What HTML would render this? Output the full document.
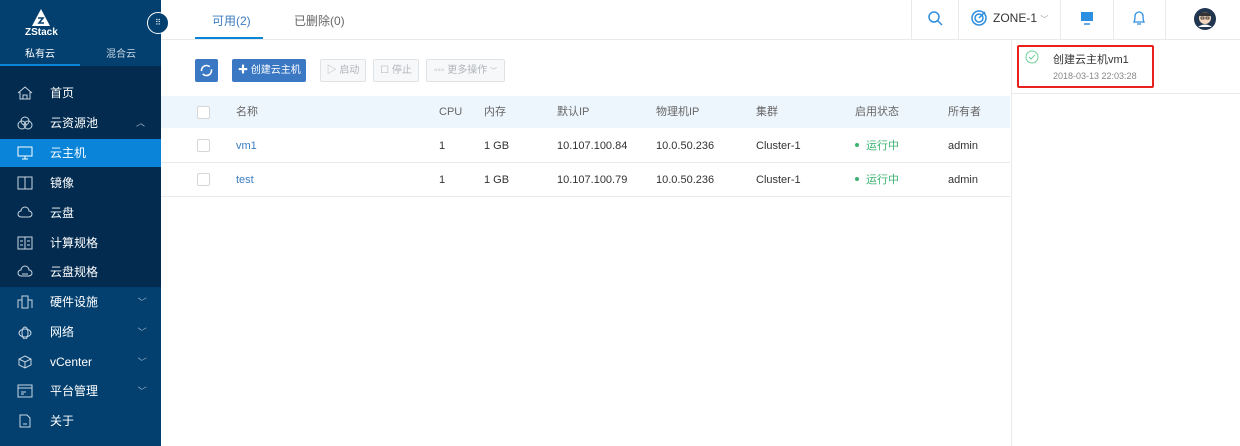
<!DOCTYPE html>
<html><head><meta charset="utf-8"><style>
*{margin:0;padding:0;box-sizing:border-box}
body{width:1240px;height:446px;overflow:hidden;background:#fff;font-family:"Liberation Sans","Noto Sans CJK SC",sans-serif;font-size:12px;color:#333;position:relative}
.abs{position:absolute}
#sb{left:0;top:0;width:161px;height:446px;background:#03406f}
.dark{left:0;top:66px;width:161px;height:221px;background:#022b4f}
.mi{position:absolute;left:0;width:161px;height:28px;line-height:28px;color:#fff;font-size:12px}
.mi span{position:absolute;left:50px}
.mi svg{position:absolute;left:17px;top:7px}
.mi .ar{position:absolute;left:136px;color:#9fb6cc;font-size:9px}
.th{position:absolute;top:96px;height:32px;line-height:32px;color:#666;font-size:11px}
.td{position:absolute;font-size:11px;color:#333;line-height:14px}
.cb{position:absolute;left:197px;width:13px;height:13px;border:1px solid #d6d6d6;border-radius:2px;background:#fff}
.btn{position:absolute;top:59px;height:23px;line-height:21px;border:1px solid #e0e3e6;background:#f7f8f9;color:#b0b4b9;font-size:10px;text-align:center;border-radius:2px;white-space:nowrap}
.vl{position:absolute;top:0;width:1px;height:40px;background:#e8eaec}
.st{color:#3cb371}
.st b{display:inline-block;width:4px;height:4px;border-radius:50%;background:#3cb371;vertical-align:middle;margin-right:7px;margin-top:-2px}
</style></head><body>
<div id="sb" class="abs"></div>
<div class="abs dark"></div>
<!-- logo -->
<svg class="abs" style="left:32px;top:9px" width="18" height="17" viewBox="0 0 18 17"><path d="M9 0 L18 17 H0 Z" fill="#fff"/><path d="M6 9 H11 L7 14 H12" stroke="#03406f" stroke-width="1.6" fill="none"/></svg>
<div class="abs" style="left:25px;top:27px;color:#fff;font-weight:bold;font-size:10px">ZStack</div>
<div class="abs" style="left:25px;top:45px;color:#fff;font-size:10px">私有云</div>
<div class="abs" style="left:106px;top:45px;color:#c8d6e3;font-size:10px">混合云</div>
<div class="abs" style="left:0;top:64px;width:80px;height:2px;background:#0a84d8"></div>
<div class="abs" style="left:147px;top:12px;width:22px;height:22px;border-radius:50%;background:#03406f;border:1px solid #fff;color:#fff;font-size:8px;text-align:center;line-height:19px">⠿</div>
<div class="abs" style="left:0;top:139px;width:161px;height:28px;background:#0a84d8"></div>
<div class="mi" style="top:79px"><svg width="16" height="14"><path d="M1 7 L8 1 L15 7 M3 6 V13 H13 V6 M6 13 V9 H10 V13" stroke="#c9d6e2" fill="none"/></svg><span>首页</span></div>
<div class="mi" style="top:109px"><svg width="16" height="14"><circle cx="8" cy="5" r="4" stroke="#c9d6e2" fill="none"/><circle cx="5" cy="9" r="4" stroke="#c9d6e2" fill="none"/><circle cx="11" cy="9" r="4" stroke="#c9d6e2" fill="none"/></svg><span>云资源池</span><i class="ar">︿</i></div>
<div class="mi" style="top:139px"><svg width="16" height="14"><rect x="1" y="1" width="14" height="9" stroke="#fff" fill="none"/><path d="M5 13 H11 M8 10 V13" stroke="#fff"/></svg><span>云主机</span></div>
<div class="mi" style="top:169px"><svg width="16" height="14"><rect x="1" y="1" width="14" height="12" stroke="#c9d6e2" fill="none"/><path d="M8 1 V13" stroke="#c9d6e2"/></svg><span>镜像</span></div>
<div class="mi" style="top:199px"><svg width="16" height="14"><path d="M4 11 A3 3 0 0 1 4 5 A4 4 0 0 1 12 5 A3 3 0 0 1 12 11 Z" stroke="#c9d6e2" fill="none"/></svg><span>云盘</span></div>
<div class="mi" style="top:229px"><svg width="16" height="14"><rect x="1" y="1" width="14" height="12" stroke="#c9d6e2" fill="none"/><path d="M8 1 V13 M3 5 H6 M3 9 H6 M10 5 H13 M10 9 H13" stroke="#c9d6e2"/></svg><span>计算规格</span></div>
<div class="mi" style="top:258px"><svg width="16" height="14"><path d="M4 11 A3 3 0 0 1 4 5 A4 4 0 0 1 12 5 A3 3 0 0 1 12 11 Z M5 9 H11" stroke="#c9d6e2" fill="none"/></svg><span>云盘规格</span></div>
<div class="mi" style="top:288px"><svg width="16" height="14"><rect x="5" y="1" width="6" height="12" stroke="#c9d6e2" fill="none"/><path d="M1 13 V5 H5 M11 5 H15 V13" stroke="#c9d6e2" fill="none"/></svg><span>硬件设施</span><i class="ar">﹀</i></div>
<div class="mi" style="top:318px"><svg width="16" height="14"><ellipse cx="8" cy="8" rx="6" ry="4" stroke="#c9d6e2" fill="none"/><ellipse cx="8" cy="8" rx="3" ry="6" stroke="#c9d6e2" fill="none"/></svg><span>网络</span><i class="ar">﹀</i></div>
<div class="mi" style="top:348px"><svg width="16" height="14"><path d="M8 1 L14 4 V10 L8 13 L2 10 V4 Z M2 4 L8 7 L14 4 M8 7 V13" stroke="#c9d6e2" fill="none"/></svg><span>vCenter</span><i class="ar">﹀</i></div>
<div class="mi" style="top:377px"><svg width="16" height="14"><rect x="1" y="1" width="14" height="12" stroke="#c9d6e2" fill="none"/><path d="M1 4 H15 M4 8 H9 M4 10 H7" stroke="#c9d6e2"/></svg><span>平台管理</span><i class="ar">﹀</i></div>
<div class="mi" style="top:407px"><svg width="16" height="14"><path d="M3 1 H10 L13 4 V13 H3 Z M6 10 H10" stroke="#c9d6e2" fill="none"/></svg><span>关于</span></div>

<!-- top bar -->
<div class="abs" style="left:161px;top:39px;width:1079px;height:1px;background:#e8eaec"></div>
<div class="abs" style="left:212px;top:12px;color:#3c7cc0;font-size:12px">可用(2)</div>
<div class="abs" style="left:195px;top:37px;width:68px;height:2px;background:#0a84d8"></div>
<div class="abs" style="left:294px;top:12px;color:#666;font-size:12px">已删除(0)</div>
<div class="vl" style="left:911px"></div><div class="vl" style="left:958px"></div><div class="vl" style="left:1060px"></div><div class="vl" style="left:1113px"></div><div class="vl" style="left:1165px"></div>
<svg class="abs" style="left:928px;top:11px" width="15" height="15"><circle cx="6" cy="6" r="5" stroke="#2e8ee0" stroke-width="1.5" fill="none"/><path d="M10 10 L14 14" stroke="#2e8ee0" stroke-width="1.5"/></svg>
<svg class="abs" style="left:971px;top:10px" width="16" height="16"><circle cx="8" cy="8" r="7" stroke="#2e8ee0" stroke-width="1.5" fill="none"/><circle cx="8" cy="8" r="4" stroke="#2e8ee0" stroke-width="1.5" fill="none"/><path d="M8 8 L14 2" stroke="#2e8ee0" stroke-width="1.5"/></svg>
<div class="abs" style="left:993px;top:11px;font-size:12px;color:#333">ZONE-1 <span style="font-size:8px;color:#999">﹀</span></div>
<svg class="abs" style="left:1080px;top:11px" width="14" height="14"><rect x="1" y="1" width="12" height="9" fill="#2e8ee0"/><path d="M4 13 H10" stroke="#2e8ee0" stroke-width="1.5"/></svg>
<svg class="abs" style="left:1132px;top:10px" width="14" height="16"><path d="M2 12 C3 10 3 8 3 6 A4 4 0 0 1 11 6 C11 8 11 10 12 12 Z M5 14 H9" stroke="#2e8ee0" stroke-width="1.3" fill="none"/></svg>
<svg class="abs" style="left:1194px;top:8px" width="22" height="22"><circle cx="11" cy="11" r="11" fill="#1f3550"/><circle cx="11" cy="10" r="6" fill="#f3d6be"/><path d="M5 8 C5 3 17 3 17 8 Z" fill="#333"/><rect x="7" y="9" width="3" height="2" stroke="#111" fill="none" stroke-width=".7"/><rect x="12" y="9" width="3" height="2" stroke="#111" fill="none" stroke-width=".7"/><path d="M4 19 Q11 14 18 19" fill="#fff"/></svg>

<!-- buttons -->
<div class="abs" style="left:195px;top:59px;width:23px;height:23px;background:#3b78c4;border-radius:2px"><svg width="23" height="23"><circle cx="11.5" cy="11.5" r="5" stroke="#fff" stroke-width="1.5" fill="none" stroke-dasharray="12 3"/></svg></div>
<div class="abs" style="left:232px;top:59px;width:74px;height:23px;background:#3b78c4;border-radius:2px;color:#fff;font-size:10px;line-height:23px;padding-left:6px;white-space:nowrap">✚ 创建云主机</div>
<div class="btn" style="left:320px;width:46px">▷ 启动</div>
<div class="btn" style="left:373px;width:46px">☐ 停止</div>
<div class="btn" style="left:426px;width:79px">◦◦◦ 更多操作 <span style="font-size:7px">﹀</span></div>

<!-- table -->
<div class="abs" style="left:161px;top:96px;width:849px;height:32px;background:#eef6fd"></div>
<div class="abs" style="left:161px;top:162px;width:849px;height:1px;background:#e8eaec"></div>
<div class="abs" style="left:161px;top:196px;width:849px;height:1px;background:#e8eaec"></div>
<div class="cb" style="top:106px"></div><div class="cb" style="top:139px"></div><div class="cb" style="top:173px"></div>
<div class="th" style="left:236px">名称</div><div class="th" style="left:439px">CPU</div><div class="th" style="left:484px">内存</div><div class="th" style="left:557px">默认IP</div><div class="th" style="left:656px">物理机IP</div><div class="th" style="left:756px">集群</div><div class="th" style="left:855px">启用状态</div><div class="th" style="left:948px">所有者</div>
<div class="td" style="left:236px;top:139px;color:#3c7cc0">vm1</div><div class="td" style="left:439px;top:139px">1</div><div class="td" style="left:484px;top:139px">1 GB</div><div class="td" style="left:557px;top:139px">10.107.100.84</div><div class="td" style="left:656px;top:139px">10.0.50.236</div><div class="td" style="left:756px;top:139px">Cluster-1</div><div class="td st" style="left:855px;top:139px"><b></b>运行中</div><div class="td" style="left:948px;top:139px">admin</div>
<div class="td" style="left:236px;top:173px;color:#3c7cc0">test</div><div class="td" style="left:439px;top:173px">1</div><div class="td" style="left:484px;top:173px">1 GB</div><div class="td" style="left:557px;top:173px">10.107.100.79</div><div class="td" style="left:656px;top:173px">10.0.50.236</div><div class="td" style="left:756px;top:173px">Cluster-1</div><div class="td st" style="left:855px;top:173px"><b></b>运行中</div><div class="td" style="left:948px;top:173px">admin</div>

<!-- right panel -->
<div class="abs" style="left:1011px;top:40px;width:1px;height:406px;background:#e8eaec"></div>
<div class="abs" style="left:1012px;top:93px;width:228px;height:1px;background:#e8eaec"></div>
<div class="abs" style="left:1017px;top:45px;width:137px;height:43px;border:2px solid #e8211d;border-radius:2px"></div>
<svg class="abs" style="left:1025px;top:50px" width="14" height="14"><circle cx="7" cy="7" r="6" stroke="#6fcf97" fill="none"/><path d="M4 7 L6 9 L10 5" stroke="#6fcf97" fill="none"/></svg>
<div class="abs" style="left:1053px;top:51px;font-size:11px;color:#333">创建云主机vm1</div>
<div class="abs" style="left:1053px;top:71px;font-size:9px;color:#888">2018-03-13 22:03:28</div>
</body></html>
